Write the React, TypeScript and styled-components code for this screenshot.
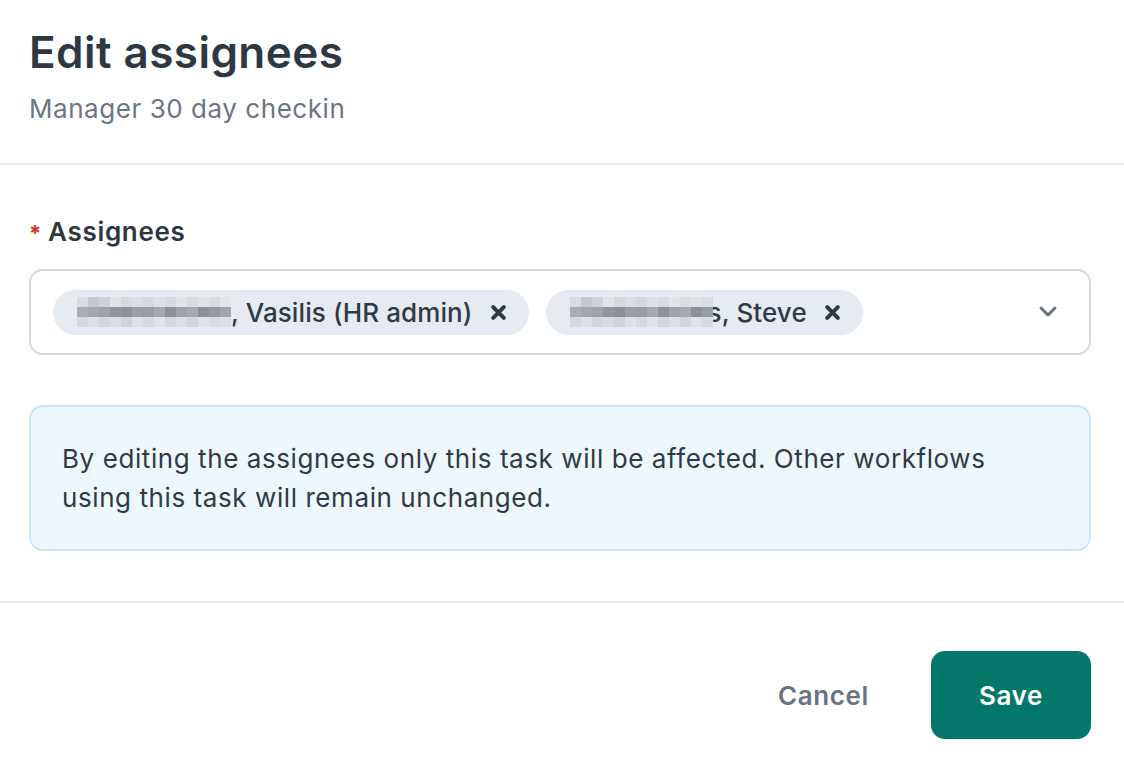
import React from 'react';
import styled, { createGlobalStyle } from 'styled-components';

const GlobalStyle = createGlobalStyle`
  html, body {
    margin: 0;
    padding: 0;
    background: #ffffff;
  }
  body {
    font-family: Inter, "Noto Sans", "Liberation Sans", sans-serif;
    color: #2f3a46;
    -webkit-font-smoothing: antialiased;
  }
  * {
    box-sizing: border-box;
  }
`;

const Modal = styled.div`
  width: 1124px;
  min-height: 760px;
  background: #ffffff;
  display: flex;
  flex-direction: column;
`;

const Header = styled.header`
  height: 163px;
  padding: 26px 29px 0;
`;

const Title = styled.h1`
  margin: 0;
  font-size: 44px;
  line-height: 52px;
  font-weight: 600;
  color: #2d3843;
  letter-spacing: 0.45px;
`;

const Subtitle = styled.p`
  margin: 13px 0 0;
  font-size: 26px;
  line-height: 36px;
  font-weight: 400;
  color: #6b7585;
  letter-spacing: 0.55px;
`;

const Divider = styled.hr`
  margin: 0;
  border: none;
  height: 2px;
  background: #e6e9ee;
`;

const Body = styled.section`
  padding: 49px 33px 50px 29px;
  display: flex;
  flex-direction: column;
`;

const Label = styled.label`
  display: flex;
  align-items: baseline;
  gap: 6px;
  font-size: 26px;
  line-height: 36px;
  font-weight: 600;
  color: #2d3843;
  letter-spacing: 0.7px;
`;

const Required = styled.span`
  color: #d1351f;
  font-size: 22px;
  font-weight: 700;
`;

const Select = styled.div`
  margin-top: 18px;
  height: 86px;
  border: 2px solid #d3dae4;
  border-radius: 14px;
  padding: 0 31px 0 22px;
  display: flex;
  align-items: center;
  gap: 17px;
`;

const Chip = styled.span`
  height: 45px;
  border-radius: 23px;
  background: #e6eaf1;
  padding: 0 22px 0 24px;
  display: inline-flex;
  align-items: center;
  font-size: 26px;
  font-weight: 500;
  color: #2f3a46;
  letter-spacing: 0.1px;
  white-space: nowrap;
`;

const RedactBlock = styled.svg<{ $overlap: number }>`
  flex-shrink: 0;
  position: relative;
  z-index: 1;
  margin-right: ${p => -p.$overlap}px;
`;

const RemoveIcon = styled.svg`
  margin-left: 17px;
  width: 17px;
  height: 17px;
  flex-shrink: 0;
`;

const Chevron = styled.svg`
  margin-left: auto;
  width: 20px;
  height: 14px;
`;

const Info = styled.div`
  margin-top: 50px;
  border: 2px solid #c9e4fb;
  background: #eef7fe;
  border-radius: 14px;
  padding: 32px 60px 32px 31px;
  font-size: 26px;
  line-height: 39px;
  color: #2f3a46;
  letter-spacing: 0.58px;
`;

const Footer = styled.footer`
  padding: 48px 33px 0;
  display: flex;
  justify-content: flex-end;
  align-items: center;
  gap: 22px;
`;

const Button = styled.button<{ $primary?: boolean }>`
  height: 88px;
  min-width: 160px;
  padding: 0 40px;
  border: none;
  border-radius: 14px;
  font-family: inherit;
  font-size: 26px;
  font-weight: 600;
  letter-spacing: 0.6px;
  cursor: pointer;
  background: ${p => (p.$primary ? '#03776a' : 'transparent')};
  color: ${p => (p.$primary ? '#ffffff' : '#6b7280')};
`;

const blurShades = [
  ['#d7dbe2', '#c4c9d1', '#cdd1d8', '#e0e3e8', '#d5d9df', '#dadde3', '#d3d7de', '#dcdfe5', '#d6dae0', '#e1e4e9', '#d9dce2', '#dfe2e7', '#d8dbe1', '#e2e5ea'],
  ['#a8adb6', '#a2a7b0', '#9da2ab', '#8f949d', '#8b9099', '#9a9fa8', '#979ca5', '#a3a8b1', '#8c919a', '#9ea3ac', '#a4a9b2', '#8a8f98', '#959aa3', '#a0a5ae'],
  ['#d4d8df', '#dde0e6', '#d2d6dd', '#d9dce2', '#cfd3da', '#dee1e7', '#d6dae0', '#e0e3e8', '#d3d7de', '#dbdee4', '#d1d5dc', '#dfe2e7', '#d7dbe1', '#dcdfe5'],
];

const Redacted: React.FC<{ cols: number; overlap?: number }> = ({ cols, overlap = 0 }) => (
  <RedactBlock $overlap={overlap} width={cols * 11} height={30} viewBox={`0 0 ${cols * 11} 30`}>
    {blurShades.map((row, r) =>
      row.slice(0, cols).map((c, i) => (
        <rect key={`${r}-${i}`} x={i * 11} y={r * 10} width={11} height={10} fill={c} />
      ))
    )}
  </RedactBlock>
);

const XMark = () => (
  <RemoveIcon viewBox="0 0 16 16">
    <path d="M3 3 L13 13 M13 3 L3 13" stroke="#2f3a46" strokeWidth="3.8" strokeLinecap="round" />
  </RemoveIcon>
);

const App: React.FC = () => (
  <>
    <GlobalStyle />
    <Modal>
      <Header>
        <Title>Edit assignees</Title>
        <Subtitle>Manager 30 day checkin</Subtitle>
      </Header>
      <Divider />
      <Body>
        <Label>
          <Required>*</Required>
          Assignees
        </Label>
        <Select>
          <Chip>
            <Redacted cols={14} />
            , Vasilis (HR admin)
            <XMark />
          </Chip>
          <Chip>
            <Redacted cols={13} overlap={5} />
            s, Steve
            <XMark />
          </Chip>
          <Chevron viewBox="0 0 20 14">
            <path d="M3 3 L10 10 L17 3" fill="none" stroke="#6b7280" strokeWidth="3" strokeLinecap="round" strokeLinejoin="round" />
          </Chevron>
        </Select>
        <Info>
          By editing the assignees only this task will be affected. Other workflows using this task will
          remain unchanged.
        </Info>
      </Body>
      <Divider />
      <Footer>
        <Button>Cancel</Button>
        <Button $primary>Save</Button>
      </Footer>
    </Modal>
  </>
);

export default App;
